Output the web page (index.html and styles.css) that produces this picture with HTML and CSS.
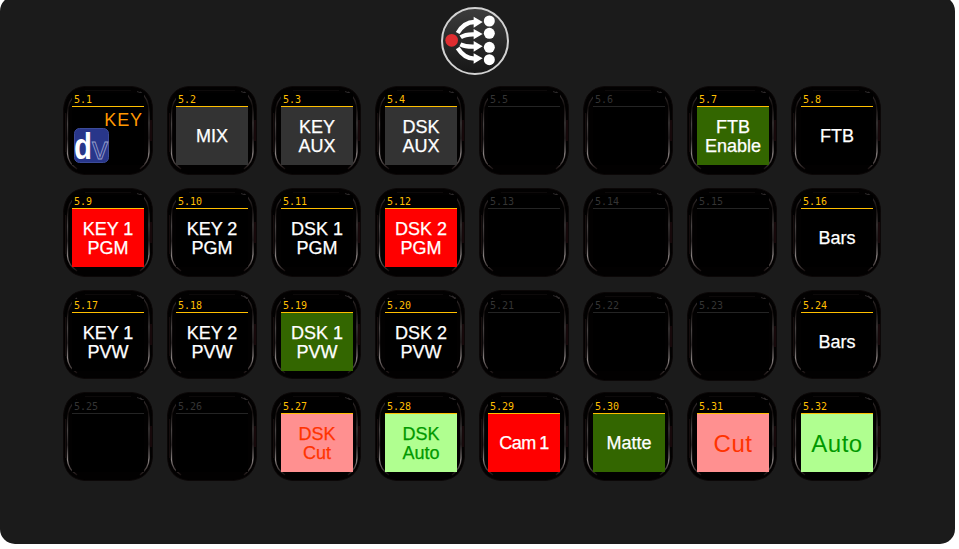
FILE: index.html
```
<!DOCTYPE html>
<html lang="en">
<head>
<meta charset="utf-8">
<title>Button panel</title>
<link rel="stylesheet" href="styles.css">
</head>
<body>
<svg class="defs" width="0" height="0" aria-hidden="true">
  <defs>
    <linearGradient id="edge" x1="0" y1="0" x2="0" y2="1">
      <stop offset="0" stop-color="#3a3435"/><stop offset=".18" stop-color="#15100f"/>
      <stop offset=".4" stop-color="#4a4545"/><stop offset=".6" stop-color="#2c2627"/>
      <stop offset=".8" stop-color="#8a8382"/><stop offset="1" stop-color="#1a1212"/>
    </linearGradient>
    <symbol id="bezel" viewBox="0 0 90 89">
      <path d="M22 .5H68Q89.500 2 89.500 24V64Q88 87 66 88.500H22Q1 87 .5 64V24Q2 2 22 .5Z" fill="#020101" stroke="#0b0707"/>
      <path d="M14 8Q4.500 14 4.500 28V68Q5 77 14 83" fill="none" stroke="url(#edge)" stroke-width="1.300"/>
      <path d="M2.500 27V66" stroke="#160d0d"/>
      <path d="M77 6Q86 12 86 26V66Q86 76 77 83" fill="none" stroke="url(#edge)" stroke-width="1.300"/>
      <path d="M88 34V55" stroke="#2a1114"/>
      <path d="M22 4.500H68" stroke="#0d0a0a"/>
      <path d="M74 5.500L81 8" stroke="#2c292a"/>
    </symbol>
  </defs>
</svg>
<main class="panel">
  <header class="top">
    <svg class="logo" viewBox="0 0 300 255" width="100" height="85">
      <defs><linearGradient id="disc" x1="0" y1="0" x2="0" y2="1"><stop offset="0" stop-color="#3c3c3c"/><stop offset="1" stop-color="#161616"/></linearGradient></defs>
      <circle cx="150" cy="123" r="99" fill="url(#disc)" stroke="#d2d2d2" stroke-width="6"/>
      <g fill="none" stroke="#fff" stroke-width="13">
        <path d="M98 99Q118 66 148 66"/><path d="M107 112Q121 102 148 103"/>
        <path d="M106 133Q122 141 148 140"/><path d="M98 144Q118 176 148 176"/>
      </g>
      <g fill="#fff">
        <path d="M146 50L173 66L146 83ZM146 87L173 102L146 118ZM146 123L173 139L146 155ZM146 160L173 175L146 191Z"/>
        <circle cx="193" cy="63" r="16.500"/><circle cx="193" cy="100" r="16.500"/>
        <circle cx="193" cy="142" r="16.500"/><circle cx="193" cy="179" r="16.500"/>
      </g>
      <circle cx="80" cy="121" r="19" fill="#df2d30"/>
    </svg>
  </header>
  <div class="grid">
    <div class="row">
      <div class="key"><svg class="bezel"><use href="#bezel"/></svg><div class="screen"><span class="no">5.1</span><div class="face dve"><span class="cap">KEY</span>
        <svg class="dv" viewBox="0 0 35 35" width="35" height="35"><rect x=".5" y=".5" width="34" height="34" rx="5" fill="#28368a" stroke="#3c4b99"/><text class="d" x="0" y="31" textLength="18" lengthAdjust="spacingAndGlyphs">d</text><text class="v" x="18" y="31" textLength="16" lengthAdjust="spacingAndGlyphs">v</text></svg></div></div></div>
      <div class="key"><svg class="bezel"><use href="#bezel"/></svg><div class="screen"><span class="no">5.2</span><div class="face gray">MIX</div></div></div>
      <div class="key c3"><svg class="bezel"><use href="#bezel"/></svg><div class="screen"><span class="no">5.3</span><div class="face gray">KEY<br>AUX</div></div></div>
      <div class="key c3"><svg class="bezel"><use href="#bezel"/></svg><div class="screen"><span class="no">5.4</span><div class="face gray">DSK<br>AUX</div></div></div>
      <div class="key off"><svg class="bezel"><use href="#bezel"/></svg><div class="screen"><span class="no">5.5</span><div class="face"></div></div></div>
      <div class="key off c3"><svg class="bezel"><use href="#bezel"/></svg><div class="screen"><span class="no">5.6</span><div class="face"></div></div></div>
      <div class="key c3"><svg class="bezel"><use href="#bezel"/></svg><div class="screen"><span class="no">5.7</span><div class="face green">FTB<br>Enable</div></div></div>
      <div class="key c3"><svg class="bezel"><use href="#bezel"/></svg><div class="screen"><span class="no">5.8</span><div class="face">FTB</div></div></div>
    </div>
    <div class="row">
      <div class="key"><svg class="bezel"><use href="#bezel"/></svg><div class="screen"><span class="no">5.9</span><div class="face red">KEY 1<br>PGM</div></div></div>
      <div class="key"><svg class="bezel"><use href="#bezel"/></svg><div class="screen"><span class="no">5.10</span><div class="face">KEY 2<br>PGM</div></div></div>
      <div class="key c3"><svg class="bezel"><use href="#bezel"/></svg><div class="screen"><span class="no">5.11</span><div class="face">DSK 1<br>PGM</div></div></div>
      <div class="key c3"><svg class="bezel"><use href="#bezel"/></svg><div class="screen"><span class="no">5.12</span><div class="face red">DSK 2<br>PGM</div></div></div>
      <div class="key off"><svg class="bezel"><use href="#bezel"/></svg><div class="screen"><span class="no">5.13</span><div class="face"></div></div></div>
      <div class="key off c3"><svg class="bezel"><use href="#bezel"/></svg><div class="screen"><span class="no">5.14</span><div class="face"></div></div></div>
      <div class="key off c3"><svg class="bezel"><use href="#bezel"/></svg><div class="screen"><span class="no">5.15</span><div class="face"></div></div></div>
      <div class="key c3"><svg class="bezel"><use href="#bezel"/></svg><div class="screen"><span class="no">5.16</span><div class="face">Bars</div></div></div>
    </div>
    <div class="row r3">
      <div class="key"><svg class="bezel"><use href="#bezel"/></svg><div class="screen"><span class="no">5.17</span><div class="face">KEY 1<br>PVW</div></div></div>
      <div class="key"><svg class="bezel"><use href="#bezel"/></svg><div class="screen"><span class="no">5.18</span><div class="face">KEY 2<br>PVW</div></div></div>
      <div class="key c3"><svg class="bezel"><use href="#bezel"/></svg><div class="screen"><span class="no">5.19</span><div class="face green">DSK 1<br>PVW</div></div></div>
      <div class="key c3"><svg class="bezel"><use href="#bezel"/></svg><div class="screen"><span class="no">5.20</span><div class="face">DSK 2<br>PVW</div></div></div>
      <div class="key off"><svg class="bezel"><use href="#bezel"/></svg><div class="screen"><span class="no">5.21</span><div class="face"></div></div></div>
      <div class="key off c3 low"><svg class="bezel"><use href="#bezel"/></svg><div class="screen"><span class="no">5.22</span><div class="face"></div></div></div>
      <div class="key off c3 low"><svg class="bezel"><use href="#bezel"/></svg><div class="screen"><span class="no">5.23</span><div class="face"></div></div></div>
      <div class="key c3"><svg class="bezel"><use href="#bezel"/></svg><div class="screen"><span class="no">5.24</span><div class="face">Bars</div></div></div>
    </div>
    <div class="row r4">
      <div class="key off"><svg class="bezel"><use href="#bezel"/></svg><div class="screen"><span class="no">5.25</span><div class="face"></div></div></div>
      <div class="key off"><svg class="bezel"><use href="#bezel"/></svg><div class="screen"><span class="no">5.26</span><div class="face"></div></div></div>
      <div class="key c3"><svg class="bezel"><use href="#bezel"/></svg><div class="screen"><span class="no">5.27</span><div class="face pink">DSK<br>Cut</div></div></div>
      <div class="key c3"><svg class="bezel"><use href="#bezel"/></svg><div class="screen"><span class="no">5.28</span><div class="face lime">DSK<br>Auto</div></div></div>
      <div class="key"><svg class="bezel"><use href="#bezel"/></svg><div class="screen"><span class="no">5.29</span><div class="face red tight">Cam 1</div></div></div>
      <div class="key c3"><svg class="bezel"><use href="#bezel"/></svg><div class="screen"><span class="no">5.30</span><div class="face green">Matte</div></div></div>
      <div class="key c3"><svg class="bezel"><use href="#bezel"/></svg><div class="screen"><span class="no">5.31</span><div class="face pink big">Cut</div></div></div>
      <div class="key c3"><svg class="bezel"><use href="#bezel"/></svg><div class="screen"><span class="no">5.32</span><div class="face lime big">Auto</div></div></div>
    </div>
  </div>
</main>
</body>
</html>
```
FILE: styles.css
```
* { box-sizing: border-box; }
html, body { margin: 0; height: 549px; overflow: hidden; background: #fff; }
.defs { position: absolute; }
.panel {
  width: 955px;
  height: 548px;
  margin-top: -4px;
  padding-top: 4px;
  background: #1b1b1b;
  border-radius: 15px;
}
.top { height: 86px; padding-left: 425px; }
.logo { display: block; }
.grid { display: grid; gap: 14px; padding-left: 63px; }
.row { display: grid; grid-template-columns: repeat(8, 90px); gap: 14px; height: 88px; --dy: 0px; }
.r3 { --dy: 2px; }
.r4 { --dy: 1px; }
.key { position: relative; height: 89px; padding: calc(7px + var(--dy)) 0 0 9px; }
.c3 { padding-left: 10px; }
.bezel { position: absolute; left: 0; top: 0; width: 90px; height: 89px; }
.low .bezel { top: 2px; }
.screen { position: relative; width: 72px; height: 72px; background: #000; }
.no {
  display: block;
  height: 14px;
  padding-left: 2px;
  border-bottom: 1px solid #ffbf00;
  color: #ffbf00;
  font: 10px/14px "DejaVu Sans Mono", monospace;
}
.off .no { color: #343434; border-color: #242424; }
.face {
  display: flex;
  align-items: center;
  justify-content: center;
  height: 58px;
  padding-top: 1px;
  color: #fff;
  font: 18px/19px "Liberation Sans", Arial, sans-serif;
  text-align: center;
  white-space: nowrap;
  -webkit-text-stroke: .25px currentColor;
}
.gray { background: #333; }
.green { background: #360; }
.red { background: #f00; }
.pink { background: #ff9090; color: #ff3300; }
.lime { background: #b0ff90; color: #009900; }
.tight { letter-spacing: -.5px; word-spacing: -1px; }
.big { padding-top: 0; font-size: 24px; -webkit-text-stroke: 0; letter-spacing: .5px; }
.dve { display: block; padding: 4px 1px 0 2px; -webkit-text-stroke: 0; }
.cap { display: block; height: 17px; text-align: right; color: #ff9900; letter-spacing: .9px; }
.dv { display: block; overflow: visible; }
.d { font: bold 37px "Liberation Sans", Arial, sans-serif; fill: #fff; }
.v { font: 32px "Liberation Sans", Arial, sans-serif; fill: none; stroke: #98a0cc; stroke-width: .8px; }
```
